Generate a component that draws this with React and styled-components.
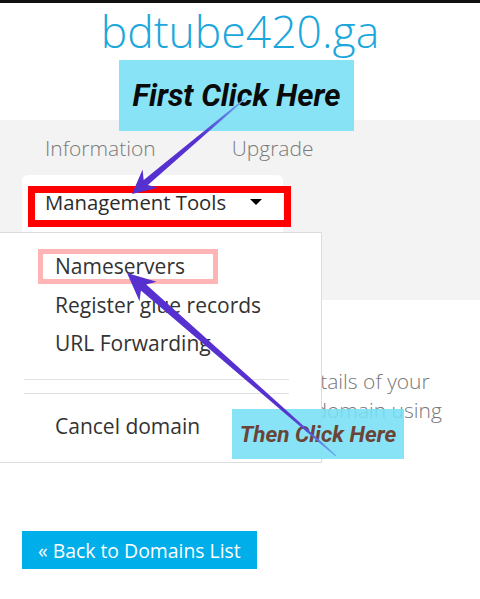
import React from 'react';
import styled, {createGlobalStyle} from 'styled-components';

const GlobalStyle = createGlobalStyle`
  html, body {
    margin: 0;
    padding: 0;
    background: #fff;
  }
  body {
    font-family: "Open Sans", "Liberation Sans", sans-serif;
  }
`;

const Page = styled.div`
  position: relative;
  width: 480px;
  height: 599px;
  overflow: hidden;
  background: #fff;
  display: flex;
  flex-direction: column;
`;

const TopBar = styled.div`
  height: 3px;
  background: #111;
`;

const Header = styled.header`
  height: 117px;
  display: flex;
  justify-content: center;
`;

const SiteTitle = styled.h1`
  margin: 0;
  font-size: 44.5px;
  font-weight: 300;
  line-height: 56px;
  color: #1ba7dc;
`;

const TabBand = styled.div`
  height: 180px;
  background: #f3f3f3;
  display: flex;
  flex-direction: column;
`;

const TabRow = styled.nav`
  height: 55px;
  display: flex;
  align-items: center;
  padding-left: 45px;
  gap: 76px;
`;

const Tab = styled.span`
  font-size: 21px;
  font-weight: 300;
  color: #7a7a7a;
`;

const ActiveTab = styled.div`
  flex: 1;
  width: 238px;
  margin-left: 22px;
  padding: 13px 0 0 23px;
  background: #fff;
  border-radius: 6px 6px 0 0;
`;

const TabLabel = styled.div`
  display: flex;
  align-items: center;
  gap: 24px;
  font-size: 20.3px;
  color: #2b2b2b;
`;

const Caret = styled.span`
  width: 0;
  height: 0;
  border-left: 6px solid transparent;
  border-right: 6px solid transparent;
  border-top: 6px solid #000;
`;

const Content = styled.main`
  flex: 1;
  padding: 67px 0 0 22px;
`;

const Intro = styled.p`
  margin: 0;
  font-size: 21px;
  font-weight: 300;
  line-height: 29px;
  color: #777;
  white-space: nowrap;
`;

const BackButton = styled.a`
  display: inline-flex;
  align-items: center;
  height: 38px;
  margin-top: 106px;
  padding: 0 16px;
  background: #00aeea;
  color: #fff;
  font-size: 19.4px;
  text-decoration: none;
`;

const Menu = styled.ul`
  position: absolute;
  left: -1px;
  top: 232px;
  width: 323px;
  margin: 0;
  padding: 14px 0 17px;
  list-style: none;
  background: #fff;
  border: 1px solid #dcdcdc;
  box-sizing: border-box;
`;

const MenuItem = styled.li`
  margin-top: ${p => p.$gap || 0}px;
  padding-left: 55px;
  font-size: 21px;
  line-height: 38.5px;
  color: #333;
`;

const Divider = styled.li`
  height: 1px;
  margin: ${p => p.$gap}px 32px 0 24px;
  background: #e2e2e2;
`;

const Highlight = styled.div`
  position: absolute;
  left: ${p => p.$x}px;
  top: ${p => p.$y}px;
  width: ${p => p.$w}px;
  height: ${p => p.$h}px;
  border: ${p => p.$border}px solid ${p => p.$color};
  box-sizing: border-box;
`;

const Callout = styled.div`
  position: absolute;
  left: ${p => p.$x}px;
  top: ${p => p.$y}px;
  width: ${p => p.$w}px;
  height: ${p => p.$h}px;
  display: flex;
  align-items: center;
  justify-content: center;
  background: rgba(120, 223, 245, 0.88);
  font-family: Roboto, "Liberation Sans", sans-serif;
  font-style: italic;
  font-weight: 700;
  font-size: ${p => p.$size}px;
  color: ${p => p.$color};
`;

const ArrowLayer = styled.svg`
  position: absolute;
  inset: 0;
  pointer-events: none;
`;

function arrowPoints(x1, y1, x2, y2, tailW, shaftW, headL, headW) {
  const dx = x2 - x1;
  const dy = y2 - y1;
  const len = Math.hypot(dx, dy);
  const ux = dx / len;
  const uy = dy / len;
  const nx = -uy;
  const ny = ux;
  const bx = x2 - ux * headL;
  const by = y2 - uy * headL;
  const back = 4;
  const pts = [
    [x1 + nx * tailW / 2, y1 + ny * tailW / 2],
    [bx + ux * back + nx * shaftW / 2, by + uy * back + ny * shaftW / 2],
    [bx - ux * 2 + nx * headW / 2, by - uy * 2 + ny * headW / 2],
    [x2, y2],
    [bx - ux * 2 - nx * headW / 2, by - uy * 2 - ny * headW / 2],
    [bx + ux * back - nx * shaftW / 2, by + uy * back - ny * shaftW / 2],
    [x1 - nx * tailW / 2, y1 - ny * tailW / 2],
  ];
  return pts.map(p => p.map(v => v.toFixed(1)).join(',')).join(' ');
}

const arrows = [
  {id: 'a1', from: [247, 97], to: [132, 194], tail: 1, shaft: 6.5, headL: 22, headW: 24, fade: 0.3},
  {id: 'a2', from: [336, 456], to: [127, 273], tail: 1.5, shaft: 8, headL: 26, headW: 26, fade: 0.12},
];

const menuItems = ['Nameservers', 'Register glue records', 'URL Forwarding'];

export default function App() {
  return (
    <Page>
      <GlobalStyle />
      <TopBar />
      <Header>
        <SiteTitle>bdtube420.ga</SiteTitle>
      </Header>
      <TabBand>
        <TabRow>
          <Tab>Information</Tab>
          <Tab>Upgrade</Tab>
        </TabRow>
        <ActiveTab>
          <TabLabel>
            Management Tools
            <Caret />
          </TabLabel>
        </ActiveTab>
      </TabBand>
      <Content>
        <Intro>
          Here you can manage all the details of your
          <br />
          nameservers, records, and the domain using
        </Intro>
        <BackButton href="#">« Back to Domains List</BackButton>
      </Content>

      <Menu>
        {menuItems.map(item => (
          <MenuItem key={item}>{item}</MenuItem>
        ))}
        <Divider $gap={16} />
        <Divider $gap={13} />
        <MenuItem $gap={13}>Cancel domain</MenuItem>
      </Menu>

      <Highlight $x={28} $y={186} $w={263} $h={41} $border={7} $color="#ff0000" />
      <Highlight $x={38} $y={249} $w={180} $h={35} $border={5} $color="#ffb5b5" />

      <Callout $x={119} $y={60} $w={235} $h={71} $size={31} $color="#0a0a0a">
        First Click Here
      </Callout>
      <Callout $x={232} $y={409} $w={172} $h={50} $size={22.5} $color="#6a4436">
        Then Click Here
      </Callout>

      <ArrowLayer width="480" height="599" viewBox="0 0 480 599">
        <defs>
          {arrows.map(a => (
            <linearGradient
              key={a.id}
              id={a.id}
              gradientUnits="userSpaceOnUse"
              x1={a.from[0]}
              y1={a.from[1]}
              x2={a.to[0]}
              y2={a.to[1]}
            >
              <stop offset="0" stopColor="#63b6f2" />
              <stop offset={a.fade} stopColor="#5a56dc" />
              <stop offset={a.fade + 0.12} stopColor="#5631cf" />
              <stop offset="1" stopColor="#5631cf" />
            </linearGradient>
          ))}
        </defs>
        {arrows.map(a => (
          <polygon
            key={a.id}
            points={arrowPoints(a.from[0], a.from[1], a.to[0], a.to[1], a.tail, a.shaft, a.headL, a.headW)}
            fill={`url(#${a.id})`}
          />
        ))}
      </ArrowLayer>
    </Page>
  );
}
